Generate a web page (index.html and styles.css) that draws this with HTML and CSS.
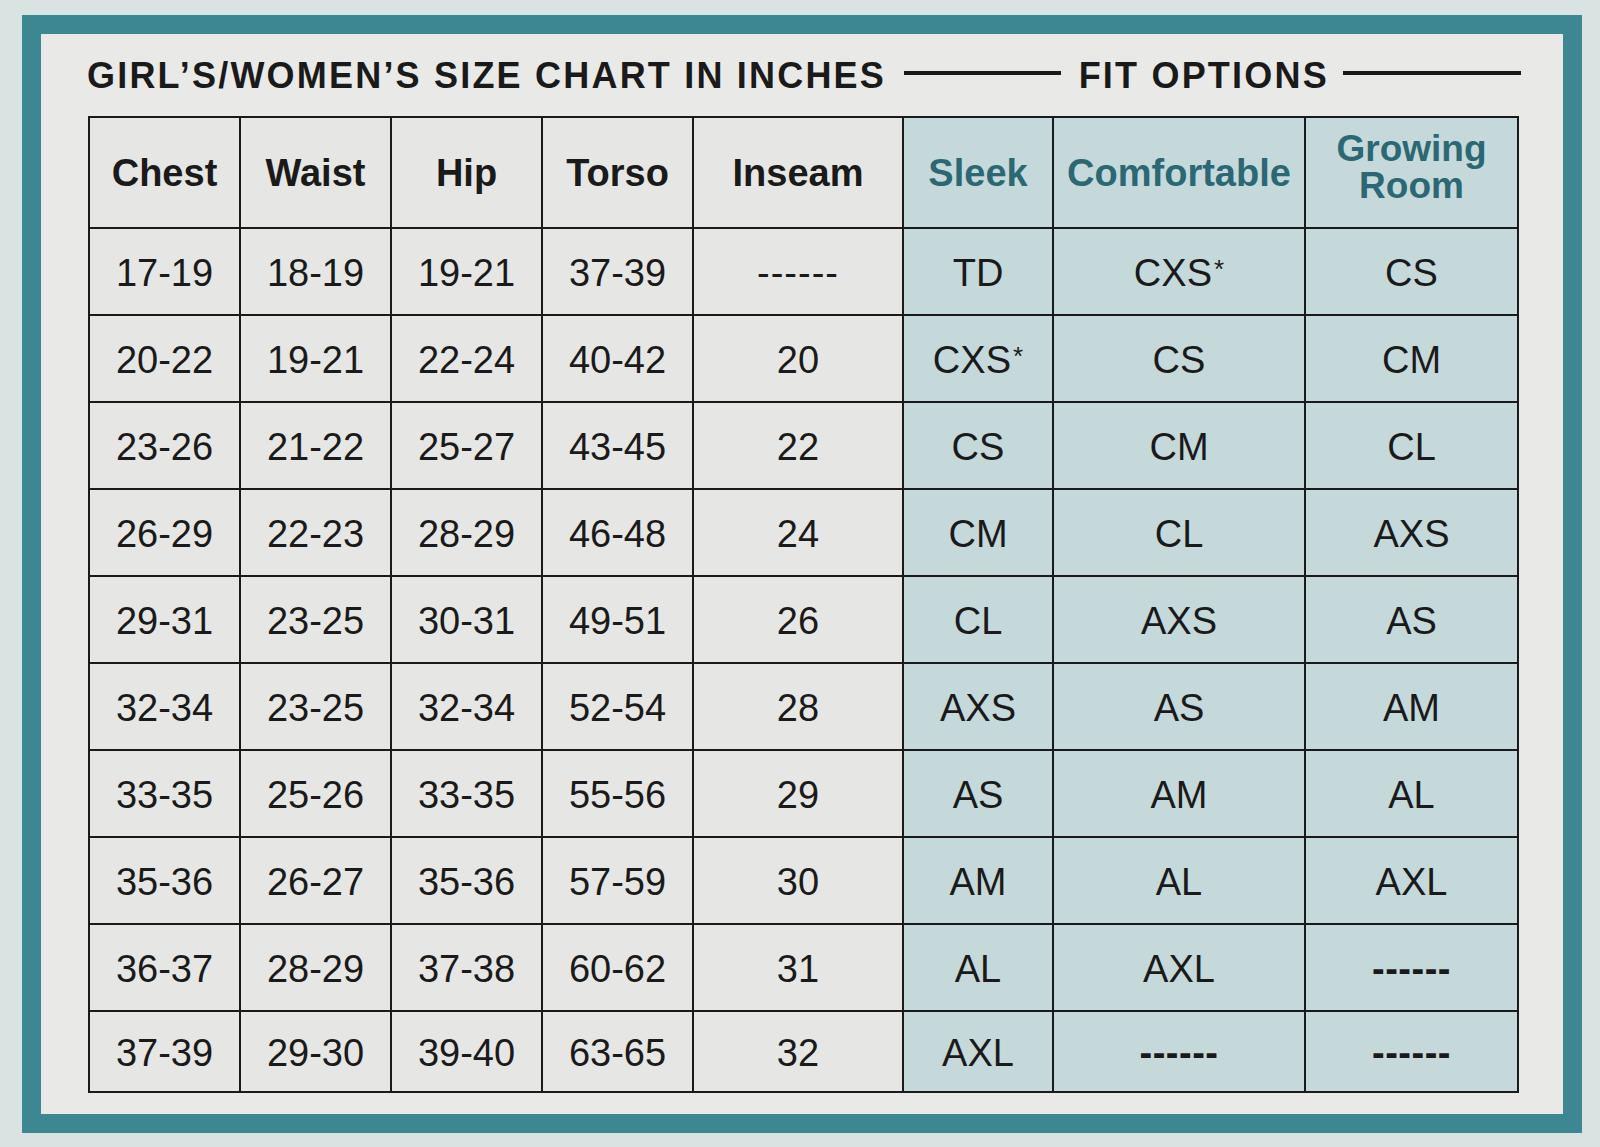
FILE: index.html
```html
<!DOCTYPE html>
<html>
<head>
<meta charset="utf-8">
<link rel="stylesheet" href="styles.css">
</head>
<body>
<div class="frame">
  <div class="sheet">
    <div class="title-row">
      <h1 class="title">GIRL’S/WOMEN’S SIZE CHART IN INCHES</h1>
      <span class="rule rule-a"></span>
      <span class="fit-title">FIT OPTIONS</span>
      <span class="rule rule-b"></span>
    </div>
    <table class="chart">
      <colgroup>
        <col class="c-m"><col class="c-m"><col class="c-m"><col class="c-m"><col class="c-ins">
        <col class="c-sleek"><col class="c-comf"><col class="c-grow">
      </colgroup>
      <thead>
        <tr>
          <th>Chest</th><th>Waist</th><th>Hip</th><th>Torso</th><th>Inseam</th>
          <th class="fit">Sleek</th><th class="fit">Comfortable</th><th class="fit grow">Growing<br>Room</th>
        </tr>
      </thead>
      <tbody>
        <tr><td>17-19</td><td>18-19</td><td>19-21</td><td>37-39</td><td class="dash-m">------</td><td class="fv">TD</td><td class="fv">CXS<span class="ast">*</span></td><td class="fv">CS</td></tr>
        <tr><td>20-22</td><td>19-21</td><td>22-24</td><td>40-42</td><td>20</td><td class="fv">CXS<span class="ast">*</span></td><td class="fv">CS</td><td class="fv">CM</td></tr>
        <tr><td>23-26</td><td>21-22</td><td>25-27</td><td>43-45</td><td>22</td><td class="fv">CS</td><td class="fv">CM</td><td class="fv">CL</td></tr>
        <tr><td>26-29</td><td>22-23</td><td>28-29</td><td>46-48</td><td>24</td><td class="fv">CM</td><td class="fv">CL</td><td class="fv">AXS</td></tr>
        <tr><td>29-31</td><td>23-25</td><td>30-31</td><td>49-51</td><td>26</td><td class="fv">CL</td><td class="fv">AXS</td><td class="fv">AS</td></tr>
        <tr><td>32-34</td><td>23-25</td><td>32-34</td><td>52-54</td><td>28</td><td class="fv">AXS</td><td class="fv">AS</td><td class="fv">AM</td></tr>
        <tr><td>33-35</td><td>25-26</td><td>33-35</td><td>55-56</td><td>29</td><td class="fv">AS</td><td class="fv">AM</td><td class="fv">AL</td></tr>
        <tr><td>35-36</td><td>26-27</td><td>35-36</td><td>57-59</td><td>30</td><td class="fv">AM</td><td class="fv">AL</td><td class="fv">AXL</td></tr>
        <tr><td>36-37</td><td>28-29</td><td>37-38</td><td>60-62</td><td>31</td><td class="fv">AL</td><td class="fv">AXL</td><td class="fv dash-f">------</td></tr>
        <tr class="last"><td>37-39</td><td>29-30</td><td>39-40</td><td>63-65</td><td>32</td><td class="fv">AXL</td><td class="fv dash-f">------</td><td class="fv dash-f">------</td></tr>
      </tbody>
    </table>
  </div>
</div>
</body>
</html>
```

FILE: styles.css
```css
html, body {
  margin: 0;
  padding: 0;
}
body {
  width: 1600px;
  height: 1147px;
  background: #d8e3e2;
  font-family: "Liberation Sans", Arial, sans-serif;
  color: #1b1a1a;
  overflow: hidden;
}
.frame {
  margin: 15px 0 0 22px;
  width: 1560px;
  height: 1118px;
  box-sizing: border-box;
  border: 19px solid #3d8792;
  background: #e9eae8;
}
.sheet {
  padding: 0 42px 0 46px;
}
.title-row {
  height: 82px;
  display: flex;
  align-items: center;
  padding-top: 2px;
  box-sizing: border-box;
}
.title {
  margin: 0;
  font-size: 36px;
  font-weight: bold;
  letter-spacing: 2.2px;
  white-space: nowrap;
}
.fit-title {
  font-size: 36px;
  font-weight: bold;
  letter-spacing: 2.2px;
  white-space: nowrap;
}
.rule {
  height: 4px;
  background: #1b1a1a;
  margin-top: -6px;
}
.rule-a {
  width: 160px;
  margin-left: 18px;
  margin-right: 18px;
}
.rule-b {
  width: 182px;
  margin-left: 14px;
}
.chart {
  border-collapse: collapse;
  table-layout: fixed;
  width: 1429px;
  margin-left: 1px;
}
.c-m { width: 151px; }
.c-ins { width: 210px; }
.c-sleek { width: 150px; }
.c-comf { width: 252px; }
.c-grow { width: 213px; }
.chart th, .chart td {
  border: 2.5px solid #1b1a1a;
  text-align: center;
  padding: 0;
  background: #e6e7e5;
}
.chart th {
  height: 109px;
  font-size: 38px;
  font-weight: bold;
  line-height: 40px;
}
.chart th.fit {
  color: #2c6874;
  background: #c5d9db;
}
.chart th.grow {
  font-size: 37px;
  line-height: 37px;
  padding-bottom: 12px;
  height: 97px;
}
.chart td {
  height: 83px;
  font-size: 38px;
  line-height: 44px;
  padding-top: 2px;
}
.chart td.fv {
  background: #c5d9db;
}
.chart tr.last td {
  height: 77px;
}
.ast {
  font-size: 26px;
  line-height: 0;
  vertical-align: 8px;
  margin-left: 2px;
}
.dash-m {
  font-size: 30px;
  letter-spacing: 1px;
}
.dash-f {
  font-size: 22px;
  font-weight: bold;
  letter-spacing: 0.5px;
}
```
